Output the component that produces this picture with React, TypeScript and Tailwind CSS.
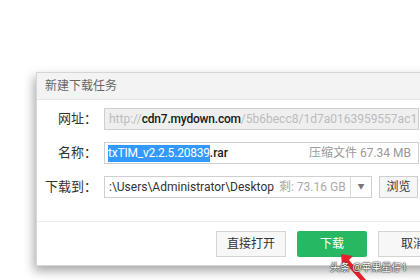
import React from "react";

const font = { fontFamily: '"Noto Sans", "Noto Sans CJK SC", sans-serif' };
const latin = { fontFamily: 'Roboto, "Noto Sans CJK SC", sans-serif' };

export default function App() {
  return (
    <div className="relative w-[420px] h-[280px] overflow-hidden bg-white" style={font}>
      <div className="ml-[36px] mt-[72px] w-[430px] bg-white border border-[#d6d6d6] shadow-[-2px_5px_10px_rgba(0,0,0,0.35)] flex flex-col">
        <div className="h-[27px] bg-[#f3f3f3] border-b border-[#e6e6e6] flex items-center pl-[8px] text-[12px] text-[#666]">
          新建下载任务
        </div>
        <div className="flex flex-col pt-[8px] gap-[12px]">
          <div className="flex items-center">
            <div className="w-[61px] text-right text-[13px] text-[#333] pr-[1px]">网址：</div>
            <div className="ml-[6px] w-[315px] h-[22px] border border-[#cfcfcf] bg-[#efefef] flex items-center pl-[4px] text-[12px] whitespace-nowrap overflow-hidden" style={latin}>
              <span className="text-[#bcbcbc]">http://</span>
              <span className="text-[#1a1a1a] font-medium tracking-[-0.2px]">cdn7.mydown.com</span>
              <span className="text-[#bcbcbc]">/5b6becc8/1d7a0163959557ac13l</span>
            </div>
          </div>
          <div className="flex items-center">
            <div className="w-[61px] text-right text-[13px] text-[#333] pr-[1px]">名称：</div>
            <div className="ml-[6px] w-[315px] h-[22px] border border-[#cfcfcf] bg-white flex items-center pl-[3px] pr-[7px] text-[12px] whitespace-nowrap overflow-hidden" style={latin}>
              <span className="bg-[#3399ff] text-white leading-[17px] tracking-[-0.2px]">txTIM_v2.2.5.20839</span>
              <span className="text-[#1a1a1a] font-medium">.rar</span>
              <span className="ml-auto text-[#999]">压缩文件 67.34 MB</span>
            </div>
          </div>
          <div className="flex items-center">
            <div className="w-[61px] text-right text-[13px] text-[#333] pr-[1px]">下载到：</div>
            <div className="ml-[6px] w-[268px] h-[22px] border border-[#cfcfcf] bg-white flex items-center text-[12px] whitespace-nowrap overflow-hidden" style={latin}>
              <div className="flex-1 pl-[4px] flex items-center overflow-hidden">
                <span className="text-[#333]">:\Users\Administrator\Desktop</span>
                <span className="ml-[5px] text-[#aaa]">剩: 73.16 GB</span>
              </div>
              <div className="w-[21px] h-full border-l border-[#dcdcdc] flex items-center justify-center text-[7px] text-[#777]">▼</div>
            </div>
            <div className="ml-[7px] w-[39px] h-[22px] border border-[#cfcfcf] bg-[#f6f6f6] flex items-center justify-center text-[12px] text-[#333]">浏览</div>
          </div>
        </div>
        <div className="mt-[23px] border-t border-[#ececec] flex gap-[11px] pl-[179px] pt-[9px] pb-[8px]">
          <div className="w-[70px] h-[26px] border border-[#d4d4d4] bg-[#f7f7f7] flex items-center justify-center text-[12px] text-[#333]">直接打开</div>
          <div className="w-[70px] h-[26px] bg-[#26b862] rounded-[2px] flex items-center justify-center text-[12px] text-white">下载</div>
          <div className="w-[70px] h-[26px] border border-[#d4d4d4] bg-[#f7f7f7] flex items-center justify-center text-[12px] text-[#333]">取消</div>
        </div>
      </div>
      <svg className="absolute left-[336px] top-[252px]" width="40" height="30" viewBox="0 0 40 30">
        <polygon points="5,2 17,4 13,8 30,28 26,30 9,11 6,14" fill="#e8202a" />
      </svg>
      <div className="absolute left-[330px] top-[260px] text-[10px] leading-[14px] text-white [text-shadow:0_0_1px_#222,0_0_1px_#222,0_0_2px_#444] whitespace-nowrap">
        头条 @苹果星仔1
      </div>
    </div>
  );
}
